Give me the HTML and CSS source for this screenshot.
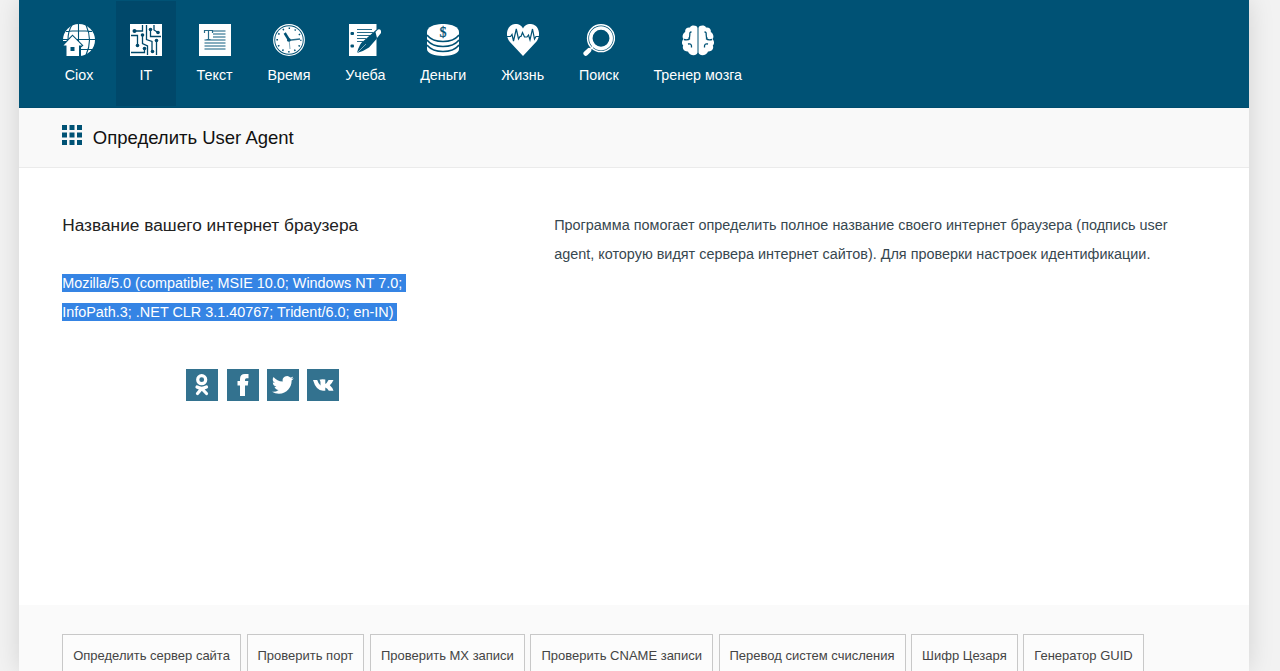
FILE: index.html
```html
<!DOCTYPE html>
<html lang="ru">
<head>
<meta charset="utf-8">
<title>Определить User Agent</title>
<link rel="stylesheet" href="styles.css">
</head>
<body>
<div class="page">
  <nav class="nav">
    <a class="nav-item"><svg class="icon" viewBox="0 0 32 32"><circle cx="16" cy="16" r="16" fill="#fff"/><path d="M0 15.500H32M3 7.500Q16 6 29 7.500M15.500 0V32M9 1Q5 7 5 16M23 1Q30 16 23 31M16 25.500H30" fill="none" stroke="#005275" stroke-width="1.100"/><path d="M0 17H3V32H0zM3 32V22L0 22 0 20 9.500 10.500 20.500 21.500 18 23.500V32z" fill="#005275"/><path d="M9.500 12 .5 21.500H3.500V32H16V21.500H19z" fill="#fff"/><path d="M7.500 23h4v4h-4z" fill="#005275"/></svg><span>Ciox</span></a>
    <a class="nav-item active"><svg class="icon" viewBox="0 0 32 32"><path fill="#fff" d="M0 0h32v32H0z"/><g fill="none" stroke="#00486a" stroke-width="1.300"><path d="M4.500 7H12.500V1M1 11.500H7.500V21M12.500 11V19.500L17.500 22V31M1 28.500H14.500V24M16.500 1V15.500L22 17.500V27M20.500 5V12.500H31M24 1V6L28 8.500M26.500 16V31"/></g><g fill="#00486a"><circle cx="4.500" cy="7" r="2"/><circle cx="7.500" cy="21.500" r="1.800"/><circle cx="12.500" cy="11" r="1.800"/><circle cx="14.500" cy="24.500" r="1.800"/><circle cx="20.500" cy="5.500" r="1.800"/><circle cx="28" cy="8.500" r="1.800"/><circle cx="26.500" cy="16.500" r="1.800"/><circle cx="22.500" cy="27.500" r="1.800"/></g></svg><span>IT</span></a>
    <a class="nav-item"><svg class="icon" viewBox="0 0 32 32"><path fill="#fff" d="M0 0h32v32H0z"/><path d="M14 7H26.500M14 10H26.500M14 13H26.500M5.500 16H26.500M5.500 19H26.500M5.500 22H26.500M5.500 25H26.500" stroke="#5f93aa" stroke-width="1.500"/><path d="M5.500 9V6.500H13.500V9M9.500 6.500V15.500M7.500 15.500H11.500" fill="none" stroke="#286b89" stroke-width="1.200"/></svg><span>Текст</span></a>
    <a class="nav-item"><svg class="icon" viewBox="0 0 32 32"><circle cx="16" cy="16" r="15.300" fill="none" stroke="#fff" stroke-width="1.200"/><circle cx="16" cy="16" r="13.800" fill="#fff"/><circle cx="16" cy="16" r="11.800" fill="none" stroke="#005275" stroke-width="1.600" stroke-dasharray="1.500 4.678" stroke-dashoffset=".75"/><path d="M11.700 9 16 16" stroke="#005275" stroke-width="2.500"/><path d="M14 16.500 27 15" stroke="#286b89" stroke-width="1.300"/><path d="M16 15 17 25" stroke="#5f93aa" stroke-width=".8"/><circle cx="16" cy="16" r="1.800" fill="#005275"/></svg><span>Время</span></a>
    <a class="nav-item"><svg class="icon" viewBox="0 0 32 32"><path fill="#fff" d="M0 0h27.500v32H0z"/><path d="M8 5.500H23M8 8.500H24M8 11.500H21M8 14.500H17M8 17.500H14" stroke="#286b89" stroke-width="1.200"/><rect x="1.500" y="8" width="3.500" height="3" rx="1" fill="#005275"/><rect x="1.500" y="20.500" width="3.500" height="3" rx="1" fill="#005275"/><path d="M8 29Q10 20 15 16.500L27.500 5.500 30 8 27.500 15 20 23.500Q15 27 8 29z" fill="#005275"/><path d="M26.500 8 29 5.500Q32.500 4.500 32 9L28 14" fill="#fff"/><path d="M8 29 17 20" stroke="#fff" stroke-width=".5"/></svg><span>Учеба</span></a>
    <a class="nav-item"><svg class="icon" viewBox="0 0 32 32"><path d="M0 8C0-2.700 32-2.700 32 8V25C32 34.300 0 34.300 0 25z" fill="#fff"/><path d="M0 11Q5 17.500 16 17.500T32 11M0 16Q5 22.500 16 22.500T32 16M0 21Q5 27.500 16 27.500T32 21" fill="none" stroke="#005275" stroke-width="1.500"/><text x="16" y="12.800" text-anchor="middle" class="dollar">$</text></svg><span>Деньги</span></a>
    <a class="nav-item"><svg class="icon" viewBox="0 0 32 32"><path d="M16 32 2.500 17.500C-1.500 12-.5 5 3.500 1.800 8-1.500 14-.3 16 4.500 18-.3 24-1.500 28.500 1.800 32.500 5 33.500 12 29.500 17.500z" fill="#fff"/><path d="M0 12.500H3.500L5 10.500 6.500 17 9.300 5 11.500 15 13 12.500H14L15.500 8.500 17.500 13H20L21.500 11 23 16 25.500 5 27.500 15 29 12.500H32" fill="none" stroke="#005275" stroke-width="1.200"/></svg><span>Жизнь</span></a>
    <a class="nav-item"><svg class="icon" viewBox="0 0 32 32"><circle cx="18" cy="14.200" r="13.400" fill="none" stroke="#fff" stroke-width="1.500"/><circle cx="18" cy="14.200" r="10.200" fill="none" stroke="#fff" stroke-width="3.500"/><path d="M2.700 29.500 6 26.300" stroke="#fff" stroke-width="4.600" stroke-linecap="round"/><path d="M6 27 10 22.500" stroke="#fff" stroke-width="1.600"/></svg><span>Поиск</span></a>
    <a class="nav-item"><svg class="icon" viewBox="0 0 32 32"><g id="brain-half"><path d="M15.500 4C15 1 9 .8 8 3.500 4.500 3 2.500 5.500 3.300 8 .5 9.500-.2 13 1.500 15-.5 17-.5 20 1.200 21.500-.2 24.500 2 28 6 27.500 7 31.500 14.500 33 15.500 28.500z" fill="#fff"/><path d="M9.500 8C6 8 9.500 13 6.500 14.500M2 15.500Q6 16.500 8 14.500M6 20Q10 19 9.500 23.500" fill="none" stroke="#005275" stroke-width="1.300"/></g><use href="#brain-half" transform="matrix(-1 0 0 1 32 0)"/></svg><span>Тренер мозга</span></a>
  </nav>
  <header class="title-bar">
    <svg class="grid-icon" viewBox="0 0 20 20"><path d="M0 0h5v5H0zM7.500 0h5v5h-5zM15 0h5v5h-5zM0 7.500h5v5H0zM7.500 7.500h5v5h-5zM15 7.500h5v5h-5zM0 15h5v5H0zM7.500 15h5v5h-5zM15 15h5v5h-5z" fill="#005275"/></svg>
    <h1>Определить User Agent</h1>
  </header>
  <main class="content">
    <section class="result">
      <h2>Название вашего интернет браузера</h2>
      <p><span class="selected">Mozilla/5.0 (compatible; MSIE 10.0; Windows NT 7.0;&nbsp;</span><br><span class="selected">InfoPath.3; .NET CLR 3.1.40767; Trident/6.0; en-IN)&nbsp;</span></p>
      <div class="social">
        <svg class="share ok" viewBox="0 0 32 32"><path fill="#33728f" d="M0 0h32v32H0z"/><circle cx="15.700" cy="10.700" r="4" fill="none" stroke="#fff" stroke-width="3.200"/><path d="M11 18Q15.700 20.500 20.500 18M15.700 19.500 11.500 24.500M15.700 19.500 20.500 24.500" fill="none" stroke="#fff" stroke-width="3.200" stroke-linecap="round"/></svg>
        <svg class="share" viewBox="0 0 32 32"><path fill="#33728f" d="M0 0h32v32H0z"/><path d="M13 27V16.500H10.500V12H13V10Q13 5 18 5H21.500V9.200H19.500Q18 9.200 18 10.800V12H21.300L20.800 16.500H18V27z" fill="#fff"/></svg>
        <svg class="share" viewBox="0 0 32 32"><path fill="#33728f" d="M0 0h32v32H0z"/><path transform="translate(5 5) scale(.91)" d="M23.950 4.570a10 10 0 0 1-2.820.77 4.950 4.950 0 0 0 2.160-2.720c-.95.550-2 .950-3.130 1.180a4.920 4.920 0 0 0-8.380 4.480C7.690 8.090 4.070 6.130 1.640 3.160a4.920 4.920 0 0 0 1.520 6.570 4.900 4.900 0 0 1-2.230-.61v.06a4.920 4.920 0 0 0 3.950 4.830 5 5 0 0 1-2.210.080 4.940 4.940 0 0 0 4.600 3.420A9.870 9.870 0 0 1 0 19.540a14 14 0 0 0 7.550 2.210c9.050 0 14-7.500 14-13.980 0-.21 0-.42-.02-.63a9.900 9.900 0 0 0 2.420-2.570z" fill="#fff"/></svg>
        <svg class="share" viewBox="0 0 32 32"><path fill="#33728f" d="M0 0h32v32H0z"/><path d="M6 11H10.200Q11.500 15 13.500 16.500V13.500Q13.500 12 12.500 10.800Q14.500 9.800 18.300 10.500V15Q20 14 21.500 11H26.500Q25.500 13.500 22.800 16.300Q25.500 18.500 26.500 21.800H21.800Q20.500 19.500 18.300 18.500V21.800H16Q9 21.500 6 11z" fill="#fff"/></svg>
      </div>
    </section>
    <section class="about">
      <p>Программа помогает определить полное название своего интернет браузера (подпись user agent, которую видят сервера интернет сайтов). Для проверки настроек идентификации.</p>
    </section>
  </main>
  <footer class="tools">
    <a>Определить сервер сайта</a><a>Проверить порт</a><a>Проверить MX записи</a><a>Проверить CNAME записи</a><a>Перевод систем счисления</a><a>Шифр Цезаря</a><a>Генератор GUID</a>
  </footer>
</div>
</body>
</html>
```

FILE: styles.css
```css
* { box-sizing: border-box; }
body { margin: 0; height: 671px; overflow: hidden; background: #f2f2f2; font: 14.420px/29px "Liberation Sans", Arial, sans-serif; color: #37474f; }
.page { width: 1230px; height: 671px; margin-left: 19px; background: #fff; box-shadow: 0 0 24px rgba(0, 0, 0, .13); display: flex; flex-direction: column; }
.nav { flex: none; height: 108px; padding: 1px 0 1px 30px; background: #005275; border-bottom: 1px solid #004c6e; display: flex; gap: 6.800px; }
.nav-item { min-width: 60px; padding: 23px 14px 0; display: flex; flex-direction: column; align-items: center; color: #fff; font-size: 14.300px; white-space: nowrap; }
.nav-item.active { background: #00486a; }
.nav-item span { margin-top: 5px; }
.icon { width: 32px; height: 32px; flex: none; }
.dollar { font: 14px "Liberation Serif", serif; fill: #005275; stroke: #005275; stroke-width: .3px; }
.title-bar { flex: none; height: 60px; padding-left: 43px; background: #f9f9f9; border-bottom: 1px solid #ebebeb; display: flex; align-items: center; gap: 10.800px; }
.grid-icon { width: 20px; height: 20px; margin-bottom: 5px; }
h1, h2, p { margin: 0; font-weight: normal; }
h1 { font-size: 18.500px; color: #111; }
.content { flex: none; height: 437px; padding: 43px 43px 0 43.200px; display: flex; }
.result { width: 401px; margin-right: 91px; }
h2 { font-size: 17.300px; color: #222; margin-bottom: 29px; }
.selected { background: #3584e4; color: #fff; padding: 1px 0; }
.about { width: 630px; }
.social { display: flex; justify-content: center; gap: 8px; margin-top: 42px; }
.share { width: 32px; height: 32px; }
.ok { margin-right: 1px; }
.tools { flex: 1; padding: 29px 43.200px 0; background: #fafafa; display: flex; gap: 5.600px; align-items: flex-start; }
.tools a { flex: none; height: 44px; padding: 0 10px; border: 1px solid #c8c8c8; background: #fcfcfc; color: #444; font-size: 13px; line-height: 42px; white-space: nowrap; }
```
